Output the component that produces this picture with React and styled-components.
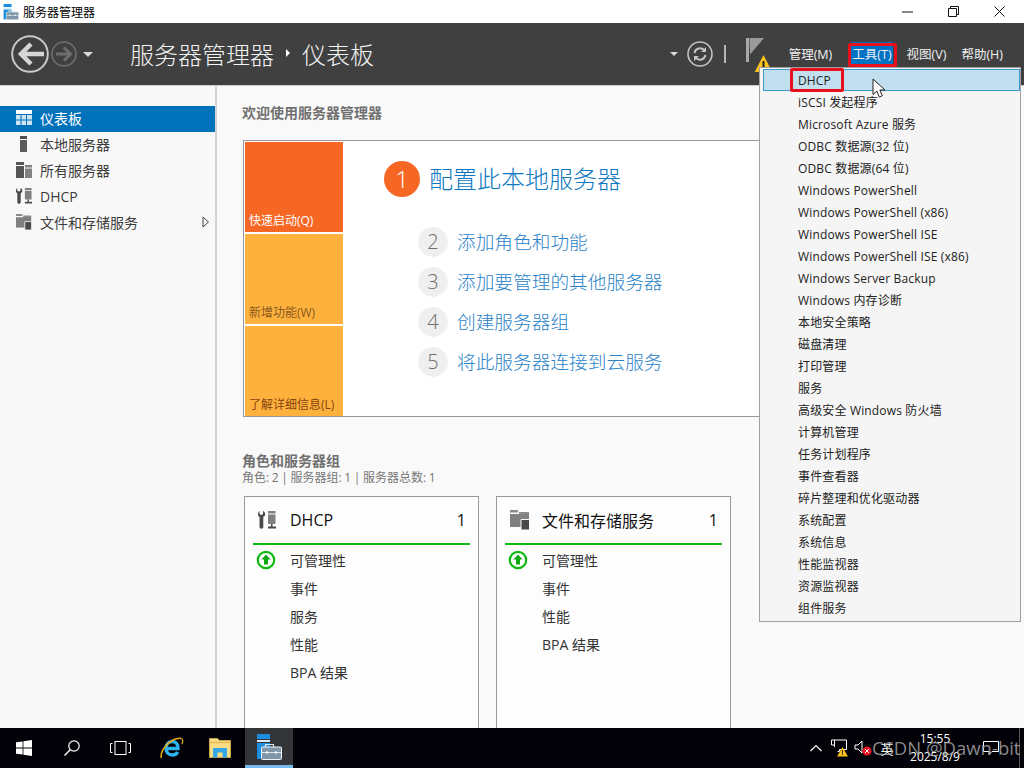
import React from "react";
import styled, { createGlobalStyle } from "styled-components";

const GlobalStyle = createGlobalStyle`
  html, body {
    margin: 0;
    padding: 0;
    background: #000;
  }
  body {
    font-family: "Open Sans", "Noto Sans CJK SC", sans-serif;
  }
`;

const Page = styled.div`
  position: relative;
  width: 1024px;
  height: 768px;
  overflow: hidden;
  display: flex;
  flex-direction: column;
  background: #f9f9f9;
`;

const TitleBar = styled.div`
  height: 23px;
  background: #fff;
  display: flex;
  align-items: center;
  padding-left: 3px;
  font-size: 12px;
  color: #000;
  svg { margin-right: 4px; }
`;

const WindowButtons = styled.div`
  margin-left: auto;
  padding-right: 2px;
  display: flex;
  align-items: center;
`;

const WindowButton = styled.div`
  width: 46px;
  height: 23px;
  display: flex;
  align-items: center;
  justify-content: center;
  svg { margin: 0; }
`;

const Header = styled.div`
  height: 63px;
  box-sizing: border-box;
  background: #404040;
  border-bottom: 1px solid #cfcfcf;
  display: flex;
  align-items: center;
  color: #fff;
`;

const NavGroup = styled.div`
  width: 130px;
  padding-left: 11px;
  box-sizing: border-box;
  display: flex;
  align-items: center;
`;

const NavDrop = styled.span`
  width: 0;
  height: 0;
  margin-left: ${(p) => p.$left || 0}px;
  border-left: ${(p) => p.$size}px solid transparent;
  border-right: ${(p) => p.$size}px solid transparent;
  border-top: ${(p) => p.$size}px solid #d8d8d8;
`;

const Crumbs = styled.div`
  display: flex;
  align-items: center;
  padding-bottom: 2px;
  font-size: 24px;
  font-weight: 300;
  color: #f4f4f4;
`;

const CrumbArrow = styled.span`
  width: 0;
  height: 0;
  margin: 0 12px;
  border-top: 4px solid transparent;
  border-bottom: 4px solid transparent;
  border-left: 4px solid #fff;
`;

const HeaderTools = styled.div`
  margin-left: auto;
  display: flex;
  align-items: center;
`;

const Separator = styled.span`
  width: 2px;
  height: 18px;
  margin: 0 20px 0 11px;
  background: #b5b5b5;
`;

const FlagBox = styled.div`
  position: relative;
  width: 26px;
  height: 40px;
  margin-right: 16px;
  svg { position: absolute; left: 0; top: 0; }
`;

const MenuBar = styled.div`
  display: flex;
  align-items: center;
  font-size: 12.5px;
  color: #f0f0f0;
  padding: 0 20px 2px 0;
`;

const MenuBarItem = styled.span`
  padding: 2px 1px;
  margin-left: ${(p) => p.$gap}px;
  background: ${(p) => (p.$active ? "#0072c6" : "transparent")};
  white-space: nowrap;
`;

const Body = styled.div`
  flex: 1;
  min-height: 0;
  display: flex;
`;

const Sidebar = styled.nav`
  width: 215px;
  flex: none;
  padding-top: 20px;
  background: #f8f8f8;
  border-right: 2px solid #d4d4d4;
`;

const SideItem = styled.div`
  height: 26px;
  box-sizing: border-box;
  display: flex;
  align-items: center;
  padding: 0 5px 2px 16px;
  font-size: 14px;
  color: ${(p) => (p.$active ? "#fff" : "#3c3c3c")};
  background: ${(p) => (p.$active ? "#0072bc" : "transparent")};
`;

const SideIcon = styled.span`
  display: flex;
  flex: none;
  margin-right: 8px;
`;

const ExpandArrow = styled.svg`
  margin-left: auto;
`;

const Main = styled.main`
  flex: 1;
  min-width: 0;
  padding: 17px 20px 0 25px;
  overflow: hidden;
`;

const Heading = styled.h2`
  margin: 0;
  font-size: 14px;
  line-height: 20px;
  font-weight: 700;
  color: #707070;
`;

const Welcome = styled.section`
  margin: 17px 0 0 1px;
  height: 277px;
  box-sizing: border-box;
  padding: 1px;
  display: flex;
  background: #fff;
  border: 1px solid #999;
`;

const Tiles = styled.div`
  width: 98px;
  flex: none;
  display: grid;
  grid-template-rows: repeat(3, 90px);
  gap: 2px;
`;

const Tile = styled.div`
  display: flex;
  align-items: flex-end;
  padding: 0 0 3px 4px;
  font-size: 12px;
  line-height: 16px;
  background: ${(p) => p.$bg};
  color: ${(p) => p.$color};
`;

const Steps = styled.div`
  padding: 19px 0 0 41px;
`;

const MainStep = styled.a`
  display: flex;
  align-items: center;
  gap: 9px;
  margin-bottom: 30px;
  font-size: 24px;
  font-weight: 300;
  color: #0d78c0;
`;

const StepBadge = styled.span`
  width: ${(p) => (p.$big ? 36 : 30)}px;
  height: ${(p) => (p.$big ? 36 : 30)}px;
  box-sizing: border-box;
  padding-bottom: 2px;
  flex: none;
  border-radius: 50%;
  display: flex;
  align-items: center;
  justify-content: center;
  font-size: ${(p) => (p.$big ? 24 : 20)}px;
  font-weight: 300;
  background: ${(p) => (p.$big ? "#f76724" : "#efefef")};
  color: ${(p) => (p.$big ? "#fff" : "#6e6e6e")};
`;

const StepLabel = styled.span`
  line-height: 24px;
  margin-bottom: 1px;
`;

const SubStep = styled.a`
  display: flex;
  align-items: center;
  gap: 9px;
  margin: 0 0 10px 34px;
  font-size: 18.7px;
  font-weight: 300;
  color: #2a82c8;
`;

const GroupHeading = styled(Heading)`
  margin-top: 34px;
`;

const GroupInfo = styled.div`
  margin-top: -1px;
  font-size: 12px;
  line-height: 16px;
  word-spacing: -0.5px;
  color: #777;
`;

const Cards = styled.div`
  margin: 10px 0 0 2px;
  display: flex;
  gap: 17px;
`;

const Card = styled.article`
  width: 235px;
  height: 300px;
  flex: none;
  box-sizing: border-box;
  padding: 0 8px;
  background: #fdfdfd;
  border: 1px solid #999;
`;

const CardHead = styled.header`
  height: 46px;
  display: flex;
  align-items: center;
  padding: 0 4px 0 5px;
  border-bottom: 2px solid #10b910;
  font-size: 16px;
  color: #111;
`;

const CardIconBox = styled.span`
  width: 32px;
  flex: none;
  display: flex;
`;

const CardCount = styled.span`
  margin-left: auto;
`;

const CardRows = styled.div`
  padding-top: 1px;
`;

const CardRow = styled.div`
  height: 28px;
  display: flex;
  align-items: center;
  padding-left: 37px;
  position: relative;
  font-size: 14px;
  color: #333;
`;

const RowIcon = styled.span`
  position: absolute;
  left: 3px;
  top: 4px;
  display: flex;
`;

const Taskbar = styled.footer`
  height: 40px;
  flex: none;
  background: #020208;
  display: flex;
  align-items: stretch;
  color: #fff;
`;

const TaskButton = styled.div`
  width: 48px;
  flex: none;
  margin-left: ${(p) => p.$gap || 0}px;
  display: flex;
  align-items: center;
  justify-content: center;
  box-sizing: border-box;
  background: ${(p) => (p.$active ? "#333538" : "transparent")};
  border-bottom: ${(p) => (p.$active ? "3px solid #76b9ed" : "0")};
`;

const Tray = styled.div`
  margin-left: auto;
  display: flex;
  align-items: center;
`;

const TrayIcon = styled.span`
  display: flex;
  align-items: center;
  justify-content: center;
  width: ${(p) => p.$w}px;
  margin-right: ${(p) => p.$gap || 0}px;
`;

const TrayLang = styled.span`
  width: 18px;
  margin-right: 1px;
  font-size: 13px;
  text-align: center;
`;

const Clock = styled.div`
  width: 76px;
  margin-right: 6px;
  text-align: center;
  font-size: 12px;
  line-height: 18px;
`;

const ShowDesktop = styled.span`
  align-self: stretch;
  width: 1px;
  margin: 0 4px 0 16px;
  background: #555;
`;

const ToolsMenu = styled.ul`
  position: absolute;
  left: 759px;
  top: 67px;
  width: 262px;
  box-sizing: border-box;
  margin: 0;
  padding: 1px 0 2px 3px;
  list-style: none;
  background: #f5f5f5;
  border: 1px solid #a0a0a0;
`;

const ToolsItem = styled.li`
  height: 22px;
  box-sizing: border-box;
  display: flex;
  align-items: center;
  padding-left: ${(p) => (p.$hover ? 34 : 35)}px;
  font-size: 12px;
  letter-spacing: 0.16px;
  color: #222;
  white-space: nowrap;
  background: ${(p) => (p.$hover ? "#c2dfef" : "transparent")};
  border: ${(p) => (p.$hover ? "1px solid #3f9bd2" : "0")};
`;

const Highlight = styled.div`
  position: absolute;
  left: ${(p) => p.$x}px;
  top: ${(p) => p.$y}px;
  width: ${(p) => p.$w}px;
  height: ${(p) => p.$h}px;
  box-sizing: border-box;
  border: 3px solid #e8101c;
  border-radius: 2px;
`;

const Pointer = styled.svg`
  position: absolute;
  left: 872px;
  top: 78px;
`;

const Watermark = styled.div`
  position: absolute;
  left: 872px;
  top: 736px;
  font-size: 18.5px;
  line-height: 24px;
  color: rgba(170, 170, 170, 0.82);
  white-space: nowrap;
`;

const ServerManagerIcon = ({ size = 16 }) => (
  <svg width={size} height={size} viewBox="0 0 26 26">
    <path d="M1 0h13v5H1z" fill="#1b8ee0" />
    <path d="M1 6h13v2H1z" fill="#d9edfa" />
    <path d="M1 9h13v16H1z" fill="#1b8ee0" />
    <path d="M9.500 13V10.500h8V13" fill="none" stroke="#dfe6ea" strokeWidth="1.200" />
    <rect x="5.500" y="13" width="20" height="12.500" rx="1" fill="#8097ab" stroke="#eef3f6" />
    <path d="M6 18.500h19" stroke="#dfe6ea" />
    <path d="M10 17.500h2v2h-2zM19 17.500h2v2h-2z" fill="#fff" />
  </svg>
);

const BackIcon = () => (
  <svg width="38" height="38" viewBox="0 0 38 38">
    <circle cx="19" cy="19" r="17.800" fill="none" stroke="#c9c9c9" strokeWidth="2" />
    <path d="M33 19H11M20 9l-10 10 10 10" fill="none" stroke="#d6d6d6" strokeWidth="4.500" />
  </svg>
);

const ForwardIcon = () => (
  <svg width="26" height="26" viewBox="0 0 26 26" style={{ marginLeft: 2 }}>
    <circle cx="13" cy="13" r="12" fill="none" stroke="#6e6e6e" strokeWidth="1.600" />
    <path d="M5 13h14M13 6.500l6.500 6.500-6.500 6.500" fill="none" stroke="#6e6e6e" strokeWidth="3" />
  </svg>
);

const RefreshIcon = () => (
  <svg width="26" height="26" viewBox="0 0 26 26" style={{ marginLeft: 9 }}>
    <circle cx="13" cy="13" r="12" fill="none" stroke="#c4c4c4" strokeWidth="1.600" />
    <path d="M7.500 12a5.600 5.600 0 0 1 9.800-2.600M18.500 14a5.600 5.600 0 0 1-9.800 2.600" fill="none" stroke="#c4c4c4" strokeWidth="2" />
    <path d="M19 6v5h-5zM7 20v-5h5z" fill="#c4c4c4" />
  </svg>
);

const FlagIcon = () => (
  <svg width="26" height="40" viewBox="0 0 26 40">
    <path d="M0 4h3v24H0z" fill="#a8a8a8" />
    <path d="M3.500 4H18L4 20.500z" fill="#9a9a9a" />
    <path d="M17.500 21l8.800 17H8.700z" fill="#fcc21b" />
    <path d="M16.500 27h2v7h-2zM16.500 35h2v2h-2z" fill="#222" />
  </svg>
);

const DashboardIcon = () => (
  <svg width="16" height="16" viewBox="0 0 16 16">
    <path d="M0 0h16v4H0z" fill="#fff" />
    <path d="M0 5h4.500v4.500H0zM5.500 5h4.500v4.500H5.500zM11 5h5v4.500h-5zM0 10.500h4.500V15H0zM5.500 10.500h4.500V15H5.500zM11 10.500h5V15h-5z" fill="#cde4f5" />
  </svg>
);

const ServerIcon = () => (
  <svg width="16" height="16" viewBox="0 0 16 16">
    <path d="M4 0h7v3H4z" fill="#4d4d4d" />
    <path d="M4 4h7v12H4z" fill="#5c5c5c" />
  </svg>
);

const AllServersIcon = () => (
  <svg width="16" height="16" viewBox="0 0 16 16">
    <path d="M0 0h8v3H0zM0 4h8v12H0z" fill="#555" />
    <path d="M9 3h7v2.500H9z" fill="#808080" />
    <path d="M9 6.500h7V16H9z" fill="#808080" />
  </svg>
);

const DhcpIcon = ({ size = 16, color = "#4a4a4a" }) => (
  <svg width={size} height={size} viewBox="0 0 18 18">
    <path d="M1.500 0v3l1.700 1L5 3V0c1.500.7 2.300 1.900 2.200 3.400C7.100 4.600 6.300 5.400 5.300 5.800V16c0 2.200-3.800 2.200-3.800 0V5.800C.6 5.400-.1 4.600 0 3.400.1 1.900.4.700 1.500 0z" fill={color} />
    <path d="M10 0h7.500v2.500H10zM10 3.500h7.500V13H10z" fill="#808080" />
    <path d="M13 13h1.500v2.500H18V17.500h-8v-2h3z" fill={color} />
  </svg>
);

const FilesIcon = ({ size = 16 }) => (
  <svg width={size} height={size} viewBox="0 0 20 20">
    <path d="M0 0h8v2.500H0zM9 2h10v3H9z" fill="#8a8a8a" />
    <path d="M0 4h19v13H0z" fill="#808080" />
    <path d="M11 9.500h8.500V20H11z" fill="#4a4a4a" stroke="#f8f8f8" strokeWidth="1" />
  </svg>
);

const StatusUpIcon = () => (
  <svg width="20" height="20" viewBox="0 0 20 20">
    <circle cx="10" cy="10" r="8.200" fill="#fff" stroke="#10b910" strokeWidth="2.200" />
    <path d="M10 4.500l4.600 5H12v5H8v-5H5.400z" fill="#10a810" />
  </svg>
);

const WinIcon = () => (
  <svg width="16" height="16" viewBox="0 0 16 16">
    <path d="M0 2.300l6.600-.9v6.200H0zM7.400 1.300L16 0v7.600H7.400zM0 8.400h6.600v6.200L0 13.700zM7.400 8.400H16V16l-8.600-1.200z" fill="#fff" />
  </svg>
);

const SearchIcon = () => (
  <svg width="18" height="18" viewBox="0 0 18 18">
    <circle cx="11" cy="7" r="5.200" fill="none" stroke="#fff" strokeWidth="1.200" />
    <path d="M7.200 10.800L1.500 16.500" stroke="#fff" strokeWidth="1.400" />
  </svg>
);

const TaskViewIcon = () => (
  <svg width="21" height="14" viewBox="0 0 21 14">
    <rect x="5" y="0.500" width="11" height="13" fill="none" stroke="#fff" />
    <path d="M2.500 2.500H.5v9h2M18.500 2.500h2v9h-2" fill="none" stroke="#fff" />
  </svg>
);

const IeIcon = () => (
  <svg width="24" height="24" viewBox="0 0 24 24">
    <path d="M6 12.500h12c.4-4-2.200-7-5.700-7C8.600 5.500 6 8.500 6 12.300c0 3.900 2.700 6.700 6.400 6.700 2.500 0 4.300-1 5.300-3" fill="none" stroke="#2cb4ef" strokeWidth="3.400" />
    <path d="M21.500 2.500C17 1 9 5 4.500 11.500 1.500 16 .5 20 1.500 22" fill="none" stroke="#e3ab18" strokeWidth="1.500" />
    <path d="M21.500 2.500c1.500 1 1.500 3 .5 5.500" fill="none" stroke="#e3ab18" strokeWidth="1.300" />
  </svg>
);

const ExplorerIcon = () => (
  <svg width="22" height="20" viewBox="0 0 22 20">
    <path d="M.5.5h8l2 2h11v17H.5z" fill="#f9dd85" stroke="#d8ae52" strokeWidth="0.800" />
    <path d="M.5 4.500h21" stroke="#e8b94c" strokeWidth="1.400" />
    <path d="M4 10h14v9.500h-4.500v-5h-5v5H4z" fill="#35a7e6" />
  </svg>
);

const NetworkIcon = () => (
  <svg width="18" height="18" viewBox="0 0 18 18">
    <path d="M.5 1h15v9.500h-7v2h-2M3.500 1v7M.5 1v5h3" fill="none" stroke="#fff" />
    <path d="M11.500 8l5.500 9.500H6z" fill="#fcc21b" />
    <path d="M11 11h1v3.500h-1zM11 15h1v1h-1z" fill="#222" />
  </svg>
);

const VolumeIcon = () => (
  <svg width="20" height="18" viewBox="0 0 20 18">
    <path d="M1 6h3l4-4v12l-4-4H1z" fill="none" stroke="#fff" />
    <circle cx="13" cy="12" r="4.600" fill="#e81123" />
    <path d="M11 10l4 4M15 10l-4 4" stroke="#fff" />
  </svg>
);

const NotifyIcon = () => (
  <svg width="16" height="16" viewBox="0 0 16 16">
    <path d="M.5 1.500h15v10H9l-3 3v-3H.5z" fill="none" stroke="#fff" />
  </svg>
);

const ChevronIcon = () => (
  <svg width="12" height="8" viewBox="0 0 12 8">
    <path d="M.5 7L6 1.500 11.500 7" fill="none" stroke="#fff" strokeWidth="1.200" />
  </svg>
);

const sideItems = [
  { label: "仪表板", icon: <DashboardIcon />, active: true },
  { label: "本地服务器", icon: <ServerIcon /> },
  { label: "所有服务器", icon: <AllServersIcon /> },
  { label: "DHCP", icon: <DhcpIcon /> },
  { label: "文件和存储服务", icon: <FilesIcon />, arrow: true },
];

const tiles = [
  { label: "快速启动(Q)", bg: "#f76724", color: "#fff" },
  { label: "新增功能(W)", bg: "#ffb13d", color: "#8a5a1c" },
  { label: "了解详细信息(L)", bg: "#ffb13d", color: "#85450f" },
];

const subSteps = [
  { n: 2, label: "添加角色和功能" },
  { n: 3, label: "添加要管理的其他服务器" },
  { n: 4, label: "创建服务器组" },
  { n: 5, label: "将此服务器连接到云服务" },
];

const toolItems = [
  "DHCP",
  "iSCSI 发起程序",
  "Microsoft Azure 服务",
  "ODBC 数据源(32 位)",
  "ODBC 数据源(64 位)",
  "Windows PowerShell",
  "Windows PowerShell (x86)",
  "Windows PowerShell ISE",
  "Windows PowerShell ISE (x86)",
  "Windows Server Backup",
  "Windows 内存诊断",
  "本地安全策略",
  "磁盘清理",
  "打印管理",
  "服务",
  "高级安全 Windows 防火墙",
  "计算机管理",
  "任务计划程序",
  "事件查看器",
  "碎片整理和优化驱动器",
  "系统配置",
  "系统信息",
  "性能监视器",
  "资源监视器",
  "组件服务",
];

const roleCards = [
  {
    title: "DHCP",
    icon: <DhcpIcon size={18} />,
    rows: ["可管理性", "事件", "服务", "性能", "BPA 结果"],
  },
  {
    title: "文件和存储服务",
    icon: <FilesIcon size={20} />,
    rows: ["可管理性", "事件", "性能", "BPA 结果"],
  },
];

export default function App() {
  return (
    <Page>
      <GlobalStyle />
      <TitleBar>
        <ServerManagerIcon />
        服务器管理器
        <WindowButtons>
          <WindowButton>
            <svg width="11" height="2" viewBox="0 0 11 2"><path d="M0 1h11" stroke="#111" /></svg>
          </WindowButton>
          <WindowButton>
            <svg width="11" height="11" viewBox="0 0 11 11">
              <path d="M.5 2.500h8v8h-8zM2.500 2.500V.5h8v8h-2" fill="none" stroke="#111" />
            </svg>
          </WindowButton>
          <WindowButton>
            <svg width="11" height="11" viewBox="0 0 11 11"><path d="M.5.5l10 10M10.500.5l-10 10" stroke="#111" /></svg>
          </WindowButton>
        </WindowButtons>
      </TitleBar>

      <Header>
        <NavGroup>
          <BackIcon />
          <ForwardIcon />
          <NavDrop $left={6} $size={5} />
        </NavGroup>
        <Crumbs>
          服务器管理器
          <CrumbArrow />
          仪表板
        </Crumbs>
        <HeaderTools>
          <NavDrop $size={4} />
          <RefreshIcon />
          <Separator />
          <FlagBox><FlagIcon /></FlagBox>
          <MenuBar>
            <MenuBarItem $gap={0}>管理(M)</MenuBarItem>
            <MenuBarItem $gap={18} $active>工具(T)</MenuBarItem>
            <MenuBarItem $gap={13}>视图(V)</MenuBarItem>
            <MenuBarItem $gap={13}>帮助(H)</MenuBarItem>
          </MenuBar>
        </HeaderTools>
      </Header>

      <Body>
        <Sidebar>
          {sideItems.map((item) => (
            <SideItem key={item.label} $active={item.active}>
              <SideIcon>{item.icon}</SideIcon>
              {item.label}
              {item.arrow && (
                <ExpandArrow width="8" height="12" viewBox="0 0 8 12">
                  <path d="M1 1l5.500 5L1 11z" fill="none" stroke="#444" />
                </ExpandArrow>
              )}
            </SideItem>
          ))}
        </Sidebar>

        <Main>
          <Heading>欢迎使用服务器管理器</Heading>
          <Welcome>
            <Tiles>
              {tiles.map((t) => (
                <Tile key={t.label} $bg={t.bg} $color={t.color}>{t.label}</Tile>
              ))}
            </Tiles>
            <Steps>
              <MainStep>
                <StepBadge $big>1</StepBadge>
                <StepLabel>配置此本地服务器</StepLabel>
              </MainStep>
              {subSteps.map((s) => (
                <SubStep key={s.n}>
                  <StepBadge>{s.n}</StepBadge>
                  <StepLabel>{s.label}</StepLabel>
                </SubStep>
              ))}
            </Steps>
          </Welcome>

          <GroupHeading>角色和服务器组</GroupHeading>
          <GroupInfo>角色: 2 | 服务器组: 1 | 服务器总数: 1</GroupInfo>
          <Cards>
            {roleCards.map((card) => (
              <Card key={card.title}>
                <CardHead>
                  <CardIconBox>{card.icon}</CardIconBox>
                  {card.title}
                  <CardCount>1</CardCount>
                </CardHead>
                <CardRows>
                  {card.rows.map((row, i) => (
                    <CardRow key={row}>
                      {i === 0 && <RowIcon><StatusUpIcon /></RowIcon>}
                      {row}
                    </CardRow>
                  ))}
                </CardRows>
              </Card>
            ))}
          </Cards>
        </Main>
      </Body>

      <Taskbar>
        <TaskButton><WinIcon /></TaskButton>
        <TaskButton><SearchIcon /></TaskButton>
        <TaskButton><TaskViewIcon /></TaskButton>
        <TaskButton $gap={4}><IeIcon /></TaskButton>
        <TaskButton><ExplorerIcon /></TaskButton>
        <TaskButton $gap={1} $active><ServerManagerIcon size={26} /></TaskButton>
        <Tray>
          <TrayIcon $w={20} $gap={2}><ChevronIcon /></TrayIcon>
          <TrayIcon $w={24} $gap={1}><NetworkIcon /></TrayIcon>
          <TrayIcon $w={22} $gap={3}><VolumeIcon /></TrayIcon>
          <TrayLang>英</TrayLang>
          <Clock>15:55<br />2025/8/9</Clock>
          <TrayIcon $w={24}><NotifyIcon /></TrayIcon>
          <ShowDesktop />
        </Tray>
      </Taskbar>

      <ToolsMenu>
        {toolItems.map((label, i) => (
          <ToolsItem key={label} $hover={i === 0}>{label}</ToolsItem>
        ))}
      </ToolsMenu>
      <Highlight $x={848} $y={43} $w={49} $h={24} />
      <Highlight $x={790} $y={68} $w={54} $h={24} />
      <Pointer width="15" height="21" viewBox="0 0 15 21">
        <path d="M1 1v15.500l3.800-3.500 2.500 6 3-1.300-2.500-5.700h5.200z" fill="#fff" stroke="#222" />
      </Pointer>
      <Watermark>CSDN @Dawn-bit</Watermark>
    </Page>
  );
}
